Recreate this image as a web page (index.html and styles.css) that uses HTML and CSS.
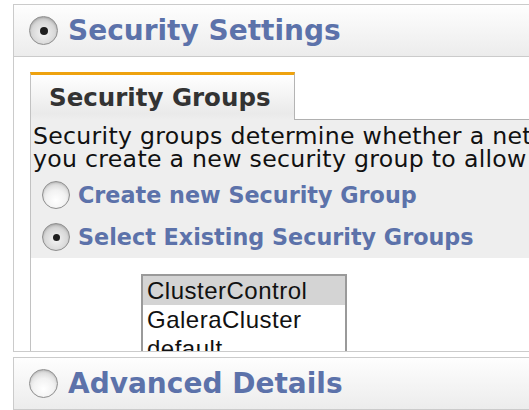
FILE: index.html
```html
<!DOCTYPE html>
<html lang="en">
<head>
    <meta charset="UTF-8">
    <title>Security Settings</title>
    <link rel="stylesheet" href="styles.css">
</head>
<body>
    <div class="page">
        <div class="panel">
            <div class="panel-head">
                <span class="radio checked"></span>
                <h2>Security Settings</h2>
            </div>
            <div class="panel-body">
                <div class="tabs">
                    <div class="tab-strip">
                        <div class="tab active">Security Groups</div>
                    </div>
                    <div class="tab-panel">
                        <div class="intro">
                            <p>Security groups determine whether a network port is open or blocked.<br>
                                you create a new security group to allow access only to the ports you need.</p>
                            <label class="option"><span class="radio small"></span>Create new Security Group</label>
                            <label class="option"><span class="radio small checked"></span>Select Existing Security Groups</label>
                        </div>
                        <div class="group-list">
                            <div class="item selected">ClusterControl</div>
                            <div class="item">GaleraCluster</div>
                            <div class="item">default</div>
                        </div>
                    </div>
                </div>
            </div>
        </div>

        <div class="panel">
            <div class="panel-head">
                <span class="radio"></span>
                <h2>Advanced Details</h2>
            </div>
        </div>
    </div>
</body>
</html>
```

FILE: styles.css
```css
body {
    margin: 0;
    background: white;
    overflow: hidden;
    font-family: "DejaVu Sans", Verdana, sans-serif;
}

.page {
    padding: 4px 0 0 13px;
    width: 700px;
}

.panel {
    border: 1px solid #cbcbcb;
    border-right: none;
    margin-bottom: 5px;
}

.panel-head {
    height: 51px;
    display: flex;
    align-items: center;
    gap: 10px;
    padding-left: 15px;
    background: linear-gradient(to bottom, #fefefe, #ececec);
}

.panel-head h2 {
    margin: 0;
    font-size: 28px;
    font-weight: bold;
    color: #5c72aa;
}

.radio {
    width: 27px;
    height: 27px;
    border-radius: 50%;
    border: 1px solid #8e8e8e;
    background: radial-gradient(circle at 50% 70%, #ffffff 0%, #f2f2f2 45%, #c4c4c4 100%);
    box-shadow: inset 0 1px 2px rgba(0,0,0,0.15);
    display: flex;
    align-items: center;
    justify-content: center;
    flex-shrink: 0;
}

.radio.checked {
    background: radial-gradient(circle at 50% 60%, #f4f4f4 0%, #d8d8d8 55%, #a8a8a8 100%);
}

.radio.checked::after {
    content: "";
    width: 8px;
    height: 8px;
    border-radius: 50%;
    background: #1e1e1e;
}

.radio.small {
    width: 26px;
    height: 26px;
}

.radio.small.checked::after {
    width: 7px;
    height: 7px;
}

.panel-body {
    border-top: 1px solid #cbcbcb;
    background: white;
    height: 295px;
    box-sizing: border-box;
    overflow: hidden;
    padding: 15px 0 0 16px;
}

.tab-strip {
    display: flex;
}

.tab-strip::after {
    content: "";
    flex: 1;
    border-bottom: 1px solid #b0b0b0;
}

.tab {
    width: 265px;
    height: 48px;
    box-sizing: border-box;
    border-top: 3px solid #eea20f;
    border-left: 1px solid #c2c2c2;
    border-right: 1px solid #b4b4b4;
    background: linear-gradient(to bottom, #ffffff, #eaeaea 85%, #eeeeee);
    font-size: 24.5px;
    font-weight: bold;
    color: #333;
    padding-left: 18px;
    line-height: 46px;
}

.tab-panel {
    border-left: 1px solid #c2c2c2;
    height: 400px;
}

.intro {
    background: #eeeeee;
    padding: 5px 0 0 2px;
    height: 133px;
}

.intro p {
    margin: 0;
    font-size: 23.6px;
    letter-spacing: 0.3px;
    line-height: 23px;
    color: #111;
    white-space: nowrap;
}

.option {
    display: flex;
    align-items: center;
    gap: 8px;
    padding-left: 9px;
    height: 42px;
    font-size: 22.3px;
    font-weight: bold;
    color: #5c72aa;
}

.option:first-of-type {
    margin-top: 3px;
}

.group-list {
    margin: 16px 0 0 110px;
    width: 206px;
    box-sizing: border-box;
    border: 2px solid #9a9a9a;
    font-family: "Liberation Sans", Arial, sans-serif;
    font-size: 24px;
    letter-spacing: 0.5px;
    color: #111;
}

.item {
    height: 29px;
    line-height: 29px;
    padding-left: 4px;
}

.item.selected {
    background: #d4d4d4;
}
```
